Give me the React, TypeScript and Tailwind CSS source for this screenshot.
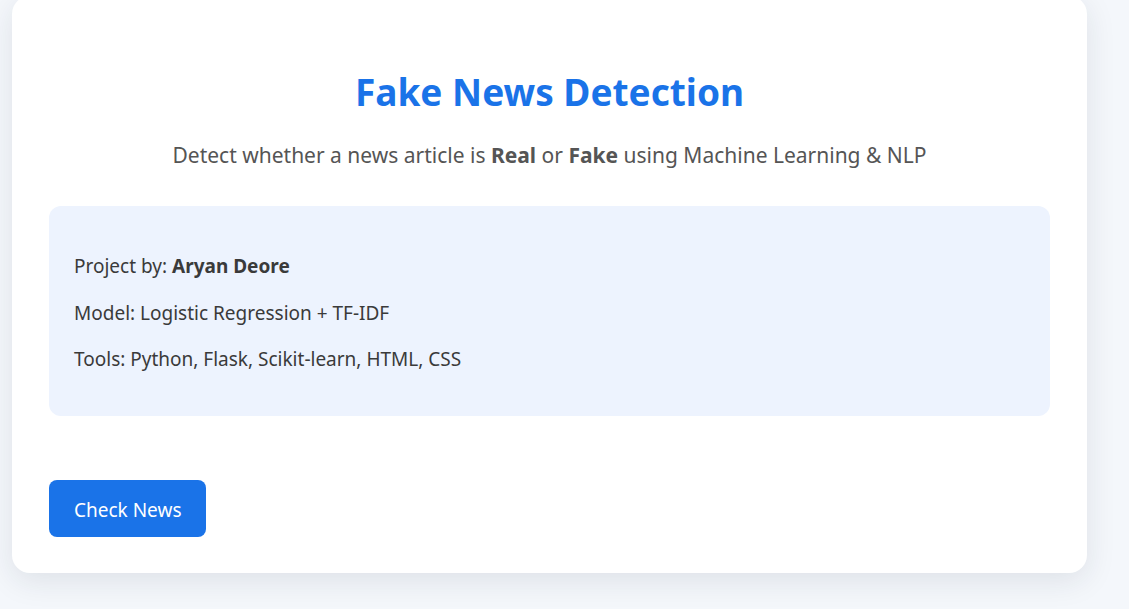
import React from "react";

export default function App() {
  return (
    <div
      className="min-h-screen w-full bg-[#f4f7fb] overflow-hidden"
      style={{ fontFamily: '"Noto Sans", "Open Sans", sans-serif' }}
    >
      <div className="ml-[12px] -mt-[4px] w-[1075px] rounded-[18px] bg-white px-[37px] pt-[72px] pb-[36px] shadow-[0_8px_30px_rgba(30,41,59,0.10)]">
        {/* Header */}
        <h1 className="text-center text-[37px] leading-[48px] font-bold text-[#1a73e8]">
          Fake News Detection
        </h1>
        <p className="mt-[24px] text-center text-[21px] leading-[30px] text-[#555]">
          Detect whether a news article is <b className="font-bold">Real</b> or{" "}
          <b className="font-bold">Fake</b> using Machine Learning &amp; NLP
        </p>

        {/* Project info */}
        <div className="mt-[36px] h-[210px] rounded-[12px] bg-[#edf3fe] px-[25px] pt-[4px] flex flex-col justify-center gap-[18px] text-[19px] leading-[28.5px] text-[#3a3a3a]">
          <p>
            Project by: <b className="font-bold">Aryan Deore</b>
          </p>
          <p>Model: Logistic Regression + TF-IDF</p>
          <p>Tools: Python, Flask, Scikit-learn, HTML, CSS</p>
        </div>

        {/* Action */}
        <button className="mt-[64px] h-[57px] rounded-[8px] bg-[#1a73e8] px-[25px] pt-[3px] text-[19px] text-white">
          Check News
        </button>
      </div>
    </div>
  );
}
